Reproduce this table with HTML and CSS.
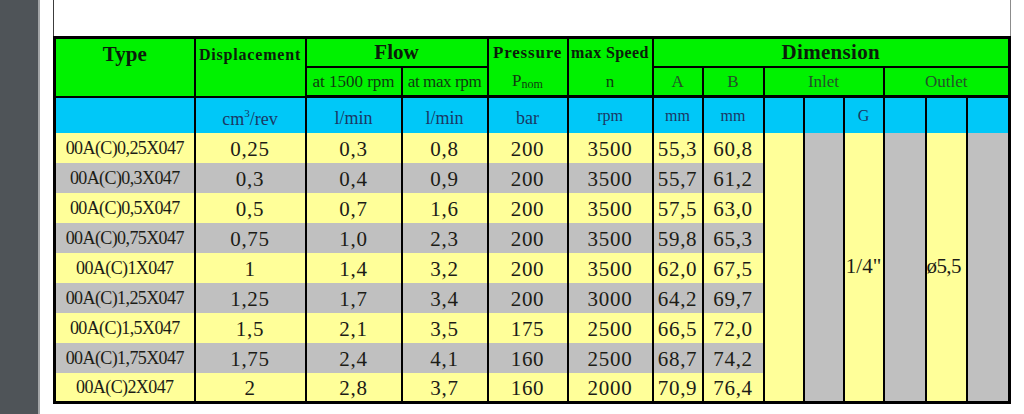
FILE: index.html
```html
<!DOCTYPE html>
<html lang="en">
<head>
<meta charset="utf-8">
<title>00A(C) X047 pump data</title>
<link rel="stylesheet" href="styles.css">
</head>
<body>
<div class="screen">
  <div class="sidebar"></div>
  <div class="gutter"></div>
  <div class="canvas">
    <div class="paper">
      <table class="spec">
        <colgroup>
          <col class="w-type"><col class="w-disp"><col class="w-f1"><col class="w-f2"><col class="w-press"><col class="w-speed"><col class="w-a"><col class="w-b"><col class="w-i1"><col class="w-i2"><col class="w-i3"><col class="w-o1"><col class="w-o2"><col class="w-o3">
        </colgroup>
        <thead>
          <tr class="h1">
            <th rowspan="2" class="top title">Type</th>
            <th rowspan="2" class="top label disp">Displacement</th>
            <th colspan="2" class="title">Flow</th>
            <th class="label open-bottom press">Pressure</th>
            <th class="label open-bottom speed">max Speed</th>
            <th colspan="8" class="title dim">Dimension</th>
          </tr>
          <tr class="h2">
            <td>at 1500 rpm</td>
            <td class="tight">at max rpm</td>
            <td class="open-top">P<sub>nom</sub></td>
            <td class="open-top">n</td>
            <td class="muted">A</td>
            <td class="muted">B</td>
            <td colspan="3" class="muted">Inlet</td>
            <td colspan="3" class="muted">Outlet</td>
          </tr>
          <tr class="units">
            <td></td>
            <td>cm<sup>3</sup>/rev</td>
            <td>l/min</td>
            <td>l/min</td>
            <td>bar</td>
            <td class="sm">rpm</td>
            <td class="sm">mm</td>
            <td class="sm">mm</td>
            <td></td>
            <td></td>
            <td class="sm">G</td>
            <td></td>
            <td></td>
            <td></td>
          </tr>
        </thead>
        <tbody>
          <tr class="odd">
            <td class="name">00A(C)0,25X047</td><td>0,25</td><td>0,3</td><td>0,8</td><td>200</td><td>3500</td><td>55,3</td><td>60,8</td>
            <td rowspan="9" class="stripe-y"></td>
            <td rowspan="9" class="stripe-g"></td>
            <td rowspan="9" class="stripe-y thread">1/4"</td>
            <td rowspan="9" class="stripe-g"></td>
            <td rowspan="9" class="stripe-y bore">ø5,5</td>
            <td rowspan="9" class="stripe-g"></td>
          </tr>
          <tr class="even">
            <td class="name">00A(C)0,3X047</td><td>0,3</td><td>0,4</td><td>0,9</td><td>200</td><td>3500</td><td>55,7</td><td>61,2</td>
          </tr>
          <tr class="odd">
            <td class="name">00A(C)0,5X047</td><td>0,5</td><td>0,7</td><td>1,6</td><td>200</td><td>3500</td><td>57,5</td><td>63,0</td>
          </tr>
          <tr class="even">
            <td class="name">00A(C)0,75X047</td><td>0,75</td><td>1,0</td><td>2,3</td><td>200</td><td>3500</td><td>59,8</td><td>65,3</td>
          </tr>
          <tr class="odd">
            <td class="name">00A(C)1X047</td><td>1</td><td>1,4</td><td>3,2</td><td>200</td><td>3500</td><td>62,0</td><td>67,5</td>
          </tr>
          <tr class="even">
            <td class="name">00A(C)1,25X047</td><td>1,25</td><td>1,7</td><td>3,4</td><td>200</td><td>3000</td><td>64,2</td><td>69,7</td>
          </tr>
          <tr class="odd">
            <td class="name">00A(C)1,5X047</td><td>1,5</td><td>2,1</td><td>3,5</td><td>175</td><td>2500</td><td>66,5</td><td>72,0</td>
          </tr>
          <tr class="even">
            <td class="name">00A(C)1,75X047</td><td>1,75</td><td>2,4</td><td>4,1</td><td>160</td><td>2500</td><td>68,7</td><td>74,2</td>
          </tr>
          <tr class="odd last">
            <td class="name">00A(C)2X047</td><td>2</td><td>2,8</td><td>3,7</td><td>160</td><td>2000</td><td>70,9</td><td>76,4</td>
          </tr>
        </tbody>
      </table>
    </div>
  </div>
</div>
</body>
</html>
```

FILE: styles.css
```css
* { box-sizing: border-box; }

html, body {
  margin: 0;
  padding: 0;
  background: #ffffff;
}

body {
  font-family: "Liberation Serif", "Times New Roman", serif;
  color: #1a1a1a;
}

.screen {
  display: flex;
  width: 1024px;
  height: 414px;
  overflow: hidden;
}

.sidebar {
  width: 38px;
  flex: none;
  background: #4f5458;
}

.gutter {
  width: 2px;
  flex: none;
  background: #a3a5a7;
}

.canvas {
  flex: 1;
  background: #ffffff;
  padding-left: 13px;
  padding-right: 16px;
}

.paper {
  border-left: 1px solid #3c3c3c;
  border-right: 1px solid #8c8c8c;
  padding-top: 36px;
}

.spec {
  border-collapse: collapse;
  table-layout: fixed;
  width: calc(100% + 2px);
  margin: 0 -1px;
  border: 3px solid #000;
}

.w-type { width: 140px; }
.w-disp { width: 111px; }
.w-f1 { width: 96px; }
.w-f2 { width: 86px; }
.w-press { width: 80px; }
.w-speed { width: 85px; }
.w-a { width: 50px; }
.w-b { width: 61px; }
.w-i1 { width: 40px; }
.w-i2 { width: 40px; }
.w-i3 { width: 40px; }
.w-o1 { width: 42px; }
.w-o2 { width: 41px; }
.w-o3 { width: 43px; }

.spec th,
.spec td {
  border: 2px solid #000;
  padding: 0;
  text-align: center;
  vertical-align: middle;
  white-space: nowrap;
  overflow: visible;
}

/* header rows */
.h1 { height: 29px; }
.h2 { height: 30px; }
.units { height: 36px; }

.spec .h1 th,
.spec .h2 td {
  background: #00f200;
  color: #0b1c0b;
}

.spec .h1 th.top {
  vertical-align: top;
}

.title {
  font-size: 21px;
  font-weight: bold;
  line-height: 24px;
}

.spec .h1 th.top.title {
  padding-top: 3px;
}

.dim {
  letter-spacing: 0.3px;
}

.label {
  font-size: 16px;
  font-weight: bold;
  line-height: 20px;
}

.spec .h1 th.disp {
  letter-spacing: 0.8px;
  padding-top: 6px;
}

.press {
  font-size: 17px;
  letter-spacing: 0.8px;
}

.speed {
  letter-spacing: 0.4px;
}

.spec .open-bottom {
  border-bottom-style: hidden;
}

.spec .open-top {
  border-top-style: hidden;
}

.spec .h2 td {
  font-size: 17px;
  color: #103a10;
  padding-top: 2px;
  border-bottom-width: 3px;
}

.spec .h2 td.tight {
  letter-spacing: -0.4px;
}

.spec .h2 td.muted {
  color: #24502a;
}

.h2 sub {
  font-size: 12px;
  vertical-align: -2px;
}

.spec .units td {
  background: #00c8f8;
  color: #1b3764;
  font-size: 18px;
  padding-top: 6px;
  border-bottom-width: 3px;
}

.spec .units td.sm {
  font-size: 16px;
  padding-top: 2px;
}

.units sup {
  font-size: 11px;
  vertical-align: 8px;
}

/* data rows */
.spec tbody tr { height: 30px; }

.spec tbody td {
  font-size: 21px;
  letter-spacing: 0.7px;
  color: #1c1c16;
  border-top-style: hidden;
  border-bottom-style: hidden;
  padding-top: 3px;
}

.spec tbody tr.last td,
.spec tbody td[rowspan] {
  border-bottom: 3px solid #000;
}

.spec tbody td.name {
  font-size: 18px;
  letter-spacing: -0.6px;
  padding-top: 2px;
}

.spec tbody tr.odd td { background: #ffff99; }
.spec tbody tr.even td { background: #c0c0c0; }

.spec tbody tr td.stripe-y { background: #ffff99; }
.spec tbody tr td.stripe-g { background: #c0c0c0; }

.spec tbody td.thread {
  letter-spacing: 0;
  padding-top: 0;
}

.spec tbody td.bore {
  text-align: left;
  letter-spacing: -0.6px;
  padding-top: 0;
}
```
